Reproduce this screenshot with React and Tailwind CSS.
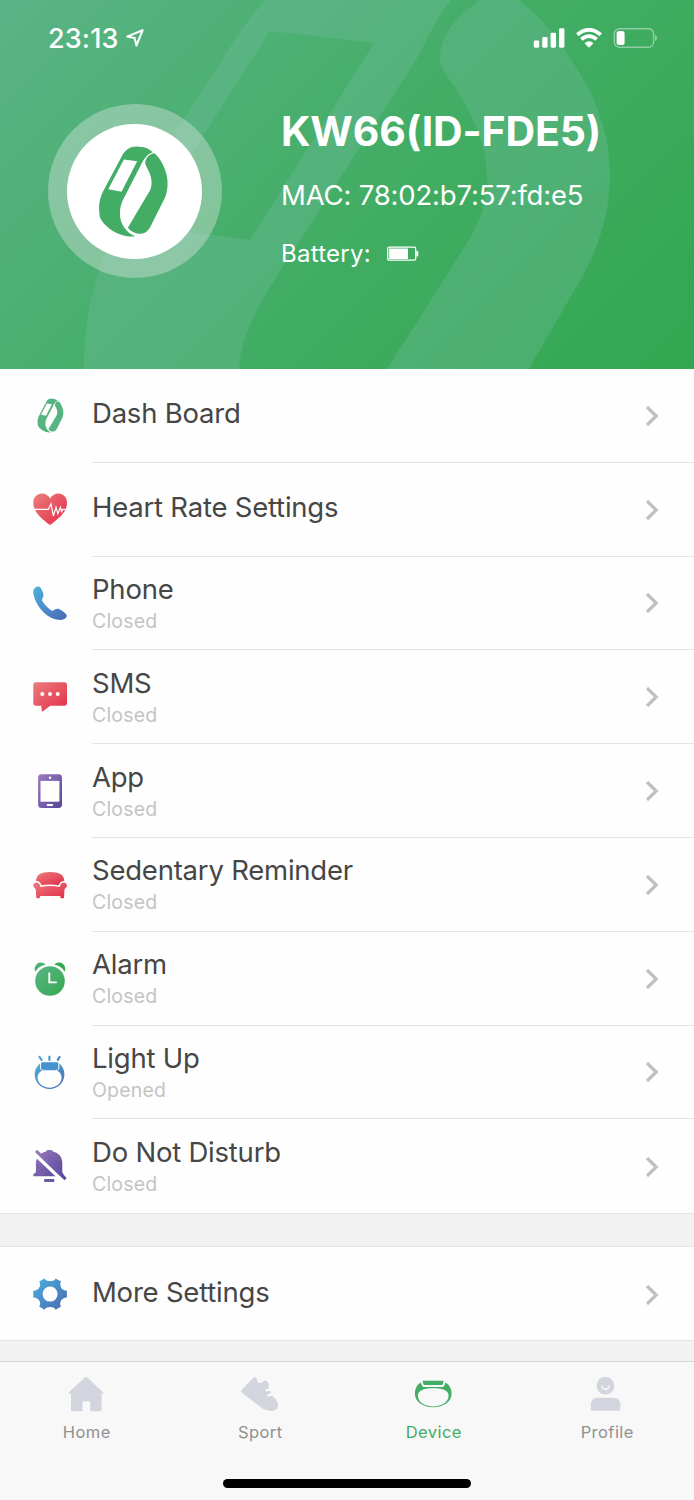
import React from 'react';

const menuItems = [
    { title: 'Dash Board', icon: 'band' },
    { title: 'Heart Rate Settings', icon: 'heart' },
    { title: 'Phone', status: 'Closed', icon: 'phone' },
    { title: 'SMS', status: 'Closed', icon: 'sms' },
    { title: 'App', status: 'Closed', icon: 'app' },
    { title: 'Sedentary Reminder', status: 'Closed', icon: 'sofa' },
    { title: 'Alarm', status: 'Closed', icon: 'alarm' },
    { title: 'Light Up', status: 'Opened', icon: 'light' },
    { title: 'Do Not Disturb', status: 'Closed', icon: 'dnd' },
];

const tabs = [
    { label: 'Home', icon: 'home' },
    { label: 'Sport', icon: 'sport' },
    { label: 'Device', icon: 'device', active: true },
    { label: 'Profile', icon: 'profile' },
];

// Shared gradients, referenced by id from every icon
const Gradients = () => (
    <svg width="0" height="0" className="absolute">
        <defs>
            <linearGradient id="red" x1="0" y1="0" x2="1" y2="1">
                <stop offset="0" stopColor="#ed7d7c" />
                <stop offset="1" stopColor="#e22c48" />
            </linearGradient>
            <linearGradient id="blue" x1="0" y1="0" x2="1" y2="1">
                <stop offset="0" stopColor="#4bb0dd" />
                <stop offset="1" stopColor="#4a69b3" />
            </linearGradient>
            <linearGradient id="purple" x1="0" y1="0" x2="1" y2="1">
                <stop offset="0" stopColor="#9a79bd" />
                <stop offset="1" stopColor="#58479a" />
            </linearGradient>
            <linearGradient id="green" x1="0" y1="0" x2="1" y2="1">
                <stop offset="0" stopColor="#5ab583" />
                <stop offset="1" stopColor="#35a853" />
            </linearGradient>
        </defs>
    </svg>
);

const BandIcon = ({ className, fill }) => (
    <svg viewBox="205 165 212 280" className={className} fill={fill}>
        <path
            fillRule="evenodd"
            d="M325 170C298 168 285 182 275 200L222 300C206 331 206 352 209 378C213 402 262 446 316 440C291 430 270 404 270 372C270 352 275 338 283 323L331 230C343 205 353 192 369 187C355 173 340 170 325 170ZM282 209L322 214L275 306L235 298Z"
        />
        <path d="M374 190C356 194 348 204 346 220C350 235 363 248 365 270C367 295 360 303 351 318L294 414C305 428 322 434 335 432C350 430 357 420 363 409L405 325C416 302 415 270 410 252C404 231 392 204 374 190Z" />
    </svg>
);

const MenuIcon = ({ name }) => {
    if (name === 'band') {
        return (
            <div className="flex h-10 w-10 items-center justify-center">
                <BandIcon className="h-[35px] w-[27px]" fill="#55b47f" />
            </div>
        );
    }
    return (
        <svg viewBox="0 0 40 40" className="h-10 w-10" fill="none">
            {name === 'heart' && (
                <>
                    <path fill="url(#red)" d="M20 35C10 27.7 3.3 21.2 3.3 12.7C3.3 7.2 7.4 3.6 12 3.6C15.5 3.6 18.6 5.6 20.1 8.6C21.7 5.6 24.8 3.6 28.3 3.6C33 3.6 37 7.2 37 12.7C37 21.2 30 27.7 20 35Z" />
                    <path d="M4.2 19.4H18.4L21 14L23.4 26L26 17.2L27.9 23.6L30.4 17.4L31.6 21.6L32.8 19.4H35.4" stroke="#fff" strokeWidth="1.2" />
                </>
            )}
            {name === 'phone' && (
                <path fill="url(#blue)" d="M7.6 3.6C5.2 4.1 3.3 6 3.3 9C3.6 16 8 23.6 13.2 28.9C18.5 34 24.5 36.9 30.7 36.9C34 36.8 36.4 35.3 36.8 33C37 31.2 34.7 29.4 31.7 27.4C28.7 25.4 26.2 25.2 24.4 26.8C23.2 27.9 22.3 28 20.6 26.9C17.8 25 14.8 21.8 12.7 18.8C11.8 17.4 11.8 16.4 12.7 15C14.2 12.8 13.5 10.3 11.6 6.5C10.4 4.2 9.3 3.4 7.6 3.6Z" />
            )}
            {name === 'sms' && (
                <>
                    <path fill="url(#red)" d="M6 5.3H34.3Q37 5.3 37 8V26Q37 28.8 34.3 28.8H20.2L13 34.2Q11.8 34.8 11.8 33.4L11.2 28.8H6Q3.3 28.8 3.3 26V8Q3.3 5.3 6 5.3Z" />
                    <circle cx="12.3" cy="17" r="2" fill="#fff" />
                    <circle cx="20" cy="17" r="2" fill="#fff" />
                    <circle cx="27.7" cy="17" r="2" fill="#fff" />
                </>
            )}
            {name === 'app' && (
                <>
                    <rect x="8.1" y="3.3" width="23.9" height="33.7" rx="3.4" fill="url(#purple)" />
                    <path fill="#fff" d="M10.5 9.9H29.4V30.7H10.5Z" />
                    <circle cx="20" cy="6.7" r="1.2" fill="#fff" />
                    <rect x="16.8" y="32.9" width="6.2" height="2" rx="0.5" fill="#fff" />
                </>
            )}
            {name === 'sofa' && (
                <>
                    <path fill="url(#red)" d="M6 15.8C6.3 10.5 9.5 8.3 14 7.4Q20 6.6 26.2 7.4C30.8 8.3 34 10.5 34.3 15.8C31.4 15.9 29.6 17.8 28.8 20.2Q20 18.6 11.5 20.2C10.7 17.8 9 15.9 6 15.8Z" />
                    <path fill="url(#red)" d="M6.3 17.4C8.8 17.3 9.8 19.4 10.6 22Q20.2 20.2 29.7 22C30.5 19.4 31.5 17.3 34 17.4C36.2 17.6 37.2 19.2 36.9 21C36.7 22.7 34.6 23.4 34.4 25.2L34.1 32.3Q34.1 33.2 33.2 33.2H30.6L30.2 31.1H10.1L9.7 33.2H7.1Q6.2 33.2 6.2 32.3L5.9 25.2C5.7 23.4 3.6 22.7 3.4 21C3.1 19.2 4.1 17.6 6.3 17.4Z" />
                </>
            )}
            {name === 'alarm' && (
                <>
                    <path fill="url(#green)" d="M5.2 12.7C3.5 8.7 6.1 4 10.4 3.6C12.6 3.5 14.5 4.3 15.7 5.6C11.2 6.6 7.7 9 5.2 12.7Z" />
                    <path fill="#36a954" d="M34.8 12.7C36.5 8.7 33.9 4 29.6 3.6C27.4 3.5 25.5 4.3 24.3 5.6C28.8 6.6 32.3 9 34.8 12.7Z" />
                    <circle cx="20" cy="22" r="14.8" fill="url(#green)" />
                    <path d="M19.3 13.6V23.4H26.8" stroke="#fff" strokeWidth="1.9" />
                </>
            )}
            {name === 'light' && (
                <>
                    <path d="M9 4.2L12 8.6" stroke="#47a3d6" strokeWidth="2.1" />
                    <path d="M19.4 3.8V8.8" stroke="#4598d0" strokeWidth="2.1" />
                    <path d="M30 4.2L27.4 8.6" stroke="#4785c4" strokeWidth="2.1" />
                    <path fill="url(#blue)" fillRule="evenodd" d="M10.1 11.6V16.2Q10.1 18.3 12.1 18.3H27.1Q29.3 18.3 29.3 16.2V11.6C32.5 14.2 34.4 18.2 34.4 22.2C34.4 30.3 28 36.9 19.6 36.9C11.2 36.9 4.7 30.3 4.7 22.2C4.7 18.2 6.7 14.2 10.1 11.6ZM19.6 16.8C12.6 16.8 7.6 20.2 7.6 25.6C7.6 31.3 12.8 35.7 19.6 35.7C26.4 35.7 31.6 31.3 31.6 25.6C31.6 20.2 26.6 16.8 19.6 16.8Z" />
                    <rect x="11.1" y="10.2" width="17.2" height="7.6" rx="1" fill="#4691cf" />
                </>
            )}
            {name === 'dnd' && (
                <>
                    <path fill="url(#purple)" d="M16 5.4Q16.5 3.9 18 3.9H21Q22.5 3.9 23 5.4C28.8 6.8 32.3 11.1 32.3 16.5V26.2L34.7 30.3H3.3V28.2L5.9 26.2V17.3C5.9 12 9.7 6.9 16 5.4Z" />
                    <rect x="14.2" y="33" width="10" height="3" fill="#6d57a6" />
                    <path d="M5.4 8.6L29.5 31.8" stroke="#fff" strokeWidth="3.6" />
                    <path d="M6 4.8L35.6 33.2" stroke="url(#purple)" strokeWidth="3.2" />
                </>
            )}
            {name === 'gear' && (
                <path
                    fill="url(#blue)"
                    fillRule="evenodd"
                    d="M14.7 4.4Q15.6 7 20.1 7Q24.7 7 25.6 4.4L31 7.5Q29.2 10.4 31 13.5Q32.5 16.5 36.9 16.8V23.4Q32.5 23.7 31 26.6Q29.2 29.7 31 32.6L25.6 35.7Q24.7 33.1 20.1 33.1Q15.6 33.1 14.7 35.7L9.2 32.6Q11.1 29.7 9.3 26.6Q7.8 23.7 3.3 23.4V16.8Q7.8 16.5 9.3 13.5Q11.1 10.4 9.2 7.5ZM20.1 12.6A7.5 7.5 0 1 0 20.1 27.6A7.5 7.5 0 1 0 20.1 12.6Z"
                />
            )}
        </svg>
    );
};

const TabIcon = ({ name }) => (
    <svg viewBox="0 0 40 40" className="h-10 w-10" fill={name === 'device' ? '#43ad65' : '#d3d5de'}>
        {name === 'home' && (
            <path d="M18.2 3.2Q19.1 2.4 20 3.2L36.3 18.4Q36.9 19.7 35.6 19.7H34.6V36Q34.6 37.3 33.3 37.3H23.2V28.5Q23.2 27.3 22 27.3H16.6Q15.4 27.3 15.4 28.5V37.3H5.3Q4 37.3 4 36V19.7H2.2Q1 19.7 1.6 18.4Z" />
        )}
        {name === 'sport' && (
            <path d="M13.4 3.7Q14.8 2.5 16.2 4L17.8 8.2Q20 10 22.5 8L24.2 6.7Q26.5 6.2 27.9 8.4Q29.3 11.5 28.5 14.2L25.8 15.6Q24.8 17 26.3 17.6L30 16.8L30.8 19L27.4 20.7Q26.4 22.2 28.2 22.7L32.2 21.8Q35.8 24.4 37.7 29C39 33.5 37 36.4 31.5 36.9C27 37 24 35.4 20.8 33.3L1.5 18.5Q.3 17.4 1.5 16.1Z" />
        )}
        {name === 'device' && (
            <>
                <path fillRule="evenodd" d="M6.8 8.6L8.2 11.9Q8.7 12.9 10 12.9H28.4Q29.7 12.9 30.1 11.9L31.5 8.6C35.6 10.9 37.6 15 37.6 19.8C37.6 27.6 29.4 33.2 19.2 33.2C9 33.2 .9 27.6 .9 19.8C.9 15 2.8 10.9 6.8 8.6ZM19.2 14.2C8.5 14.2 3.9 16.8 3.9 21.8C3.9 28.2 10.8 32.4 19.2 32.4C27.6 32.4 34.6 28.2 34.6 21.8C34.6 16.8 30 14.2 19.2 14.2Z" />
                <path d="M8.5 7.2Q8.6 6.8 9.2 6.8H29.1Q29.7 6.8 29.6 7.6L28.7 10.2Q28.5 11 27.7 11H10.6Q9.8 11 9.5 10.2Z" />
            </>
        )}
        {name === 'profile' && (
            <>
                <circle cx="18.4" cy="11.7" r="8.9" />
                <path d="M3.8 31Q4 23.8 11 23.8H26.2Q33.2 23.8 33.4 31V35.4Q33.4 36.7 32.1 36.7H5.1Q3.8 36.7 3.8 35.4Z" />
                <path d="M15 12.2A3.5 3.1 0 0 0 22 12.2" fill="none" stroke="#f8f8f8" strokeWidth="1.6" strokeLinecap="round" />
            </>
        )}
    </svg>
);

const StatusBar = () => (
    <div className="flex h-[76px] items-center justify-between pr-[37px] pl-12 text-white">
        <div className="flex items-center gap-[7px]">
            <span className="mt-0.5 text-[27px] font-medium tracking-[0.15px]">23:13</span>
            <svg viewBox="0 0 18 18" className="h-[18px] w-[18px]" fill="none" stroke="#fff" strokeWidth="2" strokeLinejoin="round">
                <path d="M16.6 1.3L1.2 7.6L8.7 9.1L10.4 16.5Z" />
            </svg>
        </div>
        <div className="flex items-center gap-[11px]">
            <svg viewBox="0 0 32 20" className="h-5 w-8" fill="#fff">
                <rect x="0.8" y="12.4" width="5.4" height="7.3" rx="1.4" />
                <rect x="9.2" y="9" width="5.4" height="10.7" rx="1.4" />
                <rect x="17.6" y="4.8" width="5.4" height="14.9" rx="1.4" />
                <rect x="26" y="0.2" width="5.4" height="19.5" rx="1.4" />
            </svg>
            <svg viewBox="0 0 26 20" className="h-5 w-[26px]" fill="none" stroke="#fff" strokeWidth="3.8">
                <path d="M1.3 6.7Q13 -3.2 24.7 6.7M5.4 11.4Q13 4.9 20.6 11.4" />
                <path d="M8.5 15.2Q13 11.3 17.5 15.2L13 19.7Z" fill="#fff" stroke="none" />
            </svg>
            <svg viewBox="0 0 44 20" className="h-5 w-11">
                <rect x="1.3" y="0.7" width="39.3" height="18.6" rx="5" fill="none" stroke="#fff" strokeOpacity="0.42" strokeWidth="1.4" />
                <rect x="3.6" y="3" width="8" height="14" rx="2.5" fill="#fff" />
                <path d="M42 6.8Q44 8 44 10Q44 12 42 13.2Z" fill="#fff" fillOpacity="0.45" />
            </svg>
        </div>
    </div>
);

const Chevron = () => (
    <svg viewBox="0 0 14 22" className="mt-px mr-[35px] h-[22px] w-[14px]" fill="none" stroke="#c0c0c2" strokeWidth="3.2">
        <path d="M2 2L11.2 11L2 20" />
    </svg>
);

const MenuRow = ({ item, last }) => (
    <div className="flex h-[93.8px] bg-[#fefefe] pl-[30px]">
        <div className="flex w-[62px] items-center">
            <MenuIcon name={item.icon} />
        </div>
        <div className={`flex flex-1 items-center justify-between ${last ? '' : 'border-b border-[#e4e4e4]'}`}>
            <div className={item.status ? 'pt-[3px]' : 'pb-1'}>
                <div className="text-[27.5px] leading-[34px] tracking-[-0.22px] text-[#464646]">{item.title}</div>
                {item.status && <div className="text-[19.5px] leading-[31px] tracking-[0.2px] text-[#c4c4c4]">{item.status}</div>}
            </div>
            <Chevron />
        </div>
    </div>
);

const DeviceHeader = () => (
    <div className="relative h-[369px] overflow-hidden bg-linear-135 from-[#5ab486] via-[#43ad66] to-[#32a74f]">
        <svg viewBox="0 0 694 369" className="absolute inset-0 h-full w-full" fill="#6dbb98" fillOpacity="0.38">
            <path
                fillRule="evenodd"
                d="M265 0C252 16 243 26 222 60L130 203C98 257 84 305 84 369H239C242 334 255 310 283 267L416 60C427 40 434 22 451 0ZM270 31L374 43L250 240L146 226Z"
            />
            <path d="M480 0C454 19 441 35 440 57C440 69 447 76 455 87C494 148 496 195 469 240L387 369H529L582 277C622 205 617 135 581 75C560 42 543 17 518 0Z" />
        </svg>
        <div className="relative">
            <StatusBar />
            <div className="flex pt-7 pl-12 text-white">
                <div className="flex h-[174px] w-[174px] items-center justify-center rounded-full bg-[#dfe5e3]/40">
                    <div className="mr-px flex h-[135px] w-[135px] items-center justify-center rounded-full bg-white">
                        <BandIcon className="mr-0.5 h-[93px] w-[71px]" fill="#43ad66" />
                    </div>
                </div>
                <div className="ml-[59px] flex flex-col">
                    <h1 className="mt-0.5 text-[41px] leading-[50px] font-bold tracking-[-0.15px]">KW66(ID-FDE5)</h1>
                    <p className="mt-5 text-[27.5px] leading-[38px] tracking-[-0.18px]">MAC: 78:02:b7:57:fd:e5</p>
                    <div className="mt-[22px] flex items-center gap-4">
                        <span className="text-[24px] leading-[36px] tracking-[0.25px]">Battery:</span>
                        <svg viewBox="0 0 32 16" className="h-4 w-8">
                            <rect x="0.7" y="1.2" width="28" height="13" rx="1.5" fill="none" stroke="#fff" strokeWidth="1.3" />
                            <path d="M2.2 2.5H21V13H2.2ZM29.3 5H30.5Q31.3 5 31.3 6V9.5Q31.3 10.5 30.5 10.5H29.3Z" fill="#fff" />
                        </svg>
                    </div>
                </div>
            </div>
        </div>
    </div>
);

const App = () => {
    return (
        <div className="flex h-[1500px] w-[694px] flex-col overflow-hidden bg-[#f2f2f2] font-['Inter','Liberation_Sans',sans-serif]">
            <Gradients />
            <DeviceHeader />
            <div className="border-b border-[#e4e4e4]">
                {menuItems.map((item, index) => (
                    <MenuRow key={item.title} item={item} last={index === menuItems.length - 1} />
                ))}
            </div>
            <div className="mt-8 h-[94.5px] overflow-hidden border-y border-[#e4e4e4]">
                <MenuRow item={{ title: 'More Settings', icon: 'gear' }} last />
            </div>

            {/* Bottom tab bar */}
            <div className="mt-auto flex h-[139px] flex-col items-center border-t border-[#d3d6d6] bg-[#f8f8f8]">
                <div className="grid w-full grid-cols-4 pt-3">
                    {tabs.map((tab) => (
                        <div key={tab.label} className="flex flex-col items-center">
                            <TabIcon name={tab.icon} />
                            <span className={`mt-[5px] text-[16.5px] leading-[26px] tracking-[0.45px] ${tab.active ? 'text-[#43ad65]' : 'text-[#919191]'}`}>{tab.label}</span>
                        </div>
                    ))}
                </div>
                <div className="mt-auto mb-3 h-[9px] w-[248px] rounded-full bg-black" />
            </div>
        </div>
    );
};

export default App;
